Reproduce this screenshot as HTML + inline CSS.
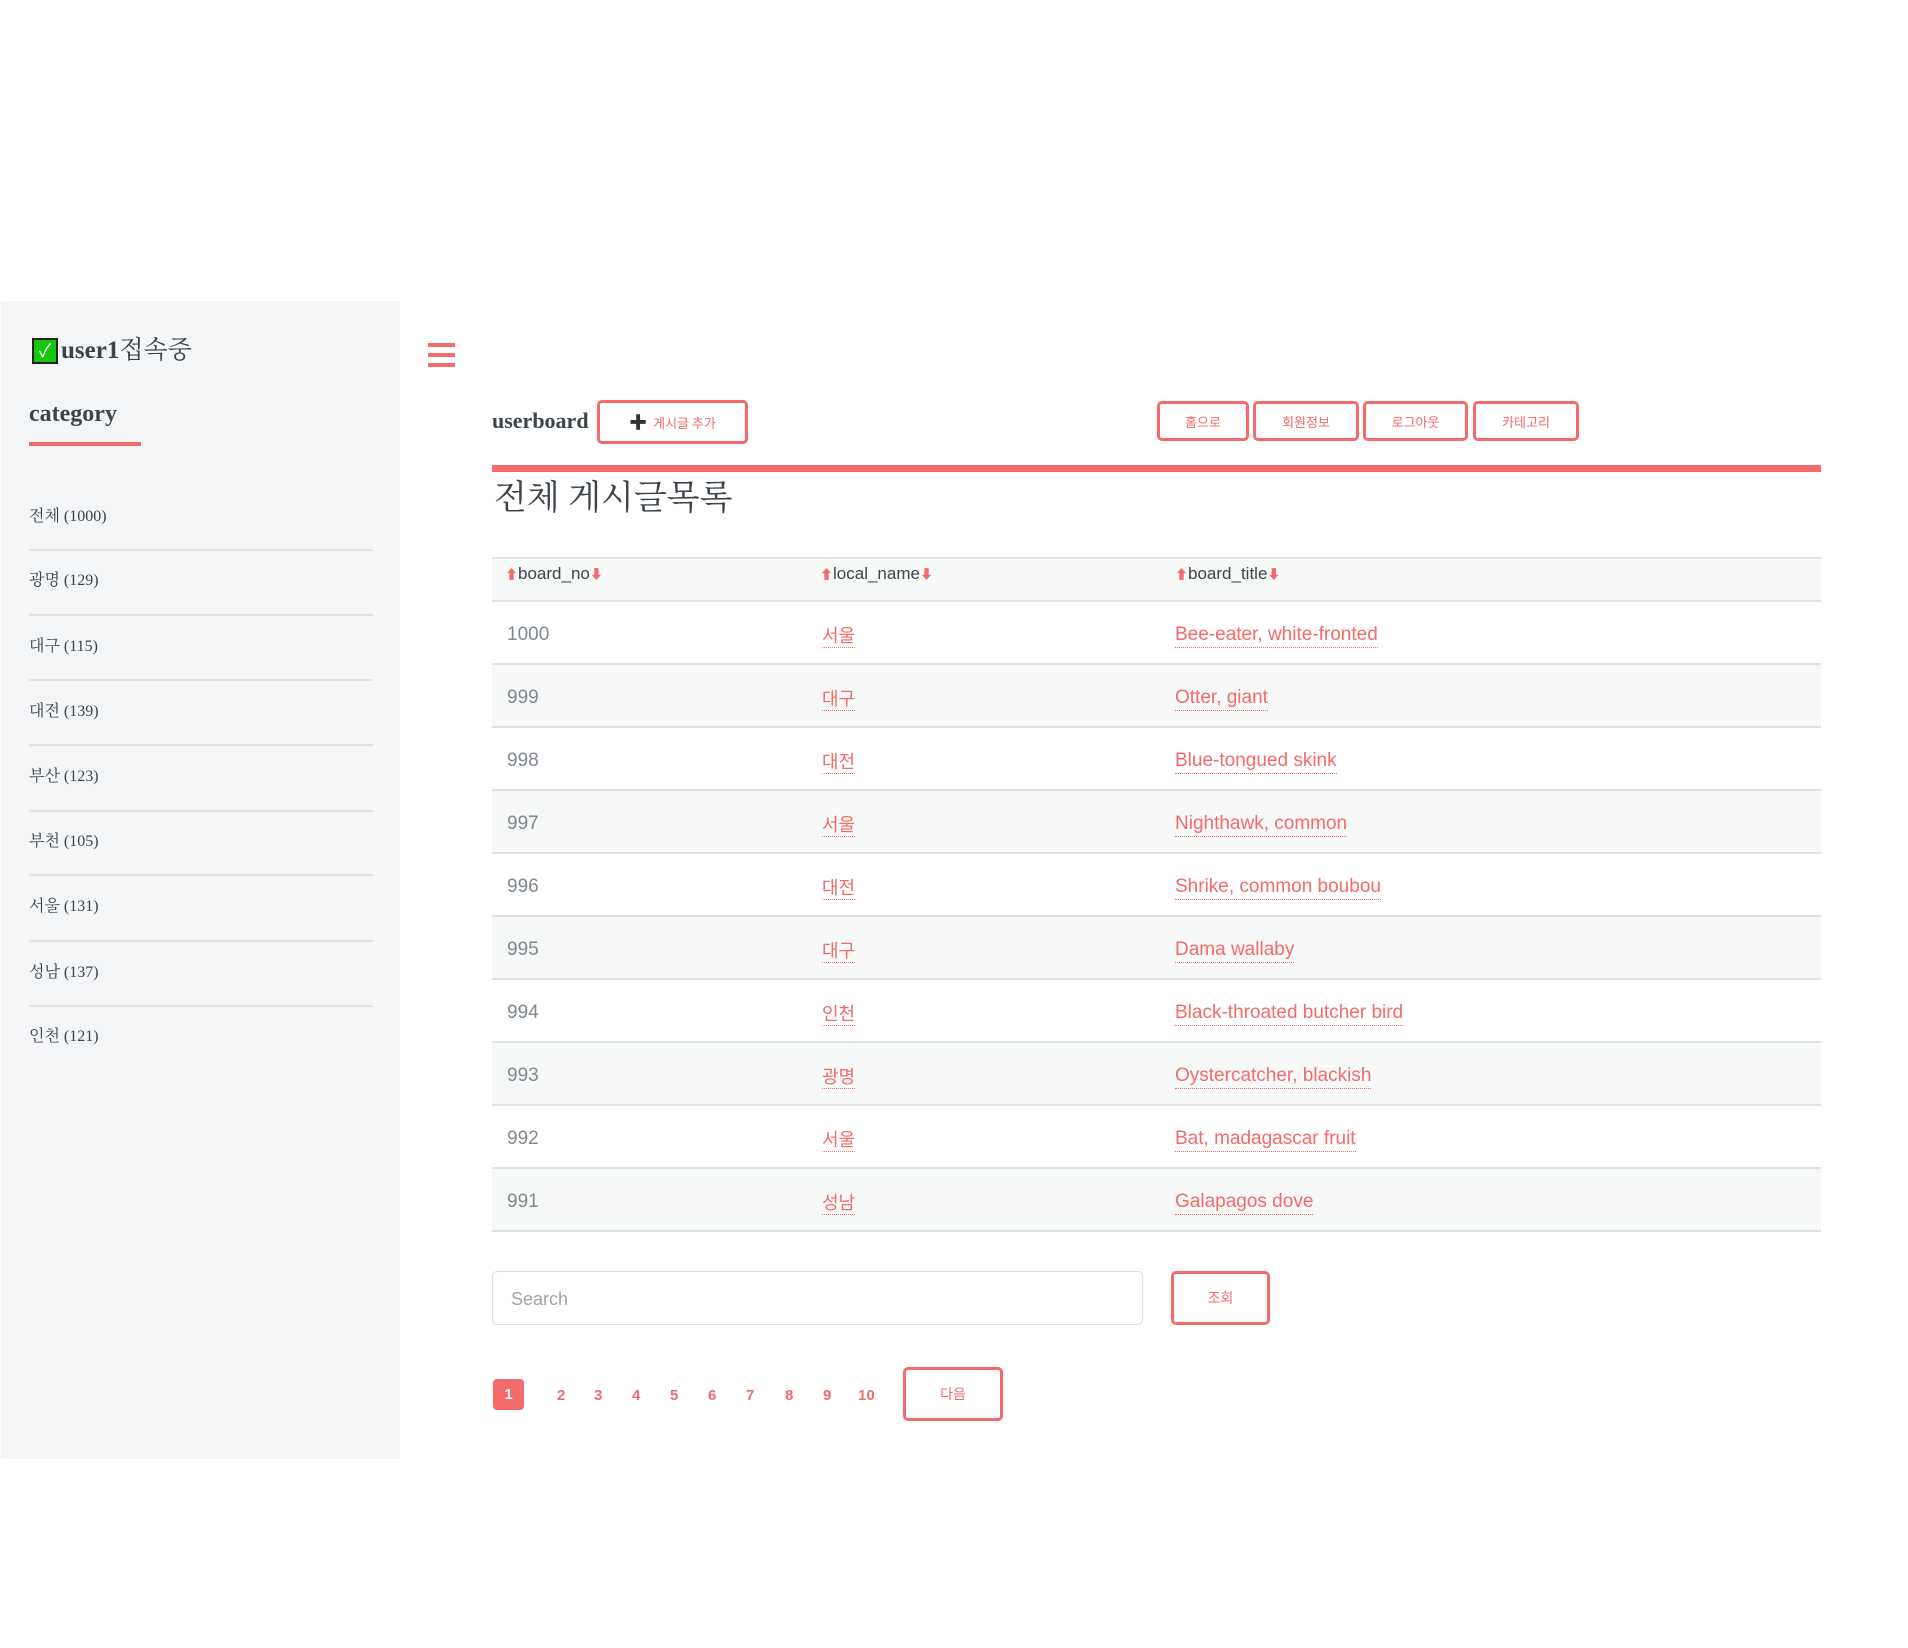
<!DOCTYPE html>
<html><head><meta charset="utf-8"><style>
*{margin:0;padding:0;box-sizing:border-box}
body{width:1908px;height:1648px;background:#fff;position:relative;font-family:"Liberation Sans","Noto Sans CJK KR",sans-serif;overflow:hidden}
.a{position:absolute}
.sb{left:1px;top:301px;width:399px;height:1158px;background:#f4f5f7}
.serif{font-family:"Liberation Serif","Noto Serif CJK KR",serif;color:#3d4449}
.cat{left:29px;width:344px;font-size:16px;line-height:20px;font-family:"Liberation Serif","Noto Serif CJK KR",serif;color:#3d4449}
.ln{left:29px;width:344px;height:2px;background:#dfe1e3}
.btn{border:3px solid #f56a6a;border-radius:5px;color:#f56a6a;font-size:13px;display:flex;align-items:center;justify-content:center;font-family:"Noto Sans CJK KR",sans-serif;background:#fff}
.row{left:492px;width:1329px;height:63px;border-bottom:2px solid #dfe2e4}
.row span{position:absolute;top:21px;font-size:19px;line-height:24px}
.n{left:15px;color:#7f888f}
.l{left:330px;color:#f56a6a;border-bottom:1px dotted #f56a6a;font-family:"Noto Sans CJK KR",sans-serif;font-size:18px!important}
.t{left:683px;color:#f56a6a;border-bottom:1px dotted #f56a6a}
.pg{top:1387px;font-size:15px;color:#f56a6a;font-weight:bold}
.ar{color:#f56a6a;font-size:13px}
</style></head><body>
<div class="a sb"></div>
<div class="a" style="left:32px;top:338px;width:26px;height:26px;background:#16c60c;border:2px solid #222;color:#fff;font-size:18px;line-height:22px;text-align:center">✓</div>
<div class="a serif" style="left:61px;top:335px;font-size:25px;font-weight:bold;line-height:32px">user1<span style="font-weight:normal">접속중</span></div>
<div class="a serif" style="left:29px;top:400px;font-size:24px;font-weight:bold;line-height:28px">category</div>
<div class="a" style="left:29px;top:442px;width:112px;height:4px;background:#f56a6a"></div>
<div class="a cat" style="top:507px">전체 (1000)</div><div class="a ln" style="top:549px"></div>
<div class="a cat" style="top:571px">광명 (129)</div><div class="a ln" style="top:614px"></div>
<div class="a cat" style="top:637px">대구 (115)</div><div class="a ln" style="top:679px"></div>
<div class="a cat" style="top:702px">대전 (139)</div><div class="a ln" style="top:744px"></div>
<div class="a cat" style="top:767px">부산 (123)</div><div class="a ln" style="top:810px"></div>
<div class="a cat" style="top:832px">부천 (105)</div><div class="a ln" style="top:874px"></div>
<div class="a cat" style="top:897px">서울 (131)</div><div class="a ln" style="top:940px"></div>
<div class="a cat" style="top:963px">성남 (137)</div><div class="a ln" style="top:1005px"></div>
<div class="a cat" style="top:1027px">인천 (121)</div>

<div class="a" style="left:428px;top:343px;width:27px;height:4px;background:#f56a6a"></div>
<div class="a" style="left:428px;top:353px;width:27px;height:4px;background:#f56a6a"></div>
<div class="a" style="left:428px;top:363px;width:27px;height:4px;background:#f56a6a"></div>

<div class="a serif" style="left:492px;top:407px;font-size:22px;font-weight:bold;line-height:28px">userboard</div>
<div class="a btn" style="left:597px;top:400px;width:151px;height:44px"><b style="color:#333;font-size:18px;margin-right:6px">✚</b>게시글 추가</div>
<div class="a btn" style="left:1157px;top:401px;width:92px;height:40px">홈으로</div>
<div class="a btn" style="left:1253px;top:401px;width:106px;height:40px">회원정보</div>
<div class="a btn" style="left:1363px;top:401px;width:105px;height:40px">로그아웃</div>
<div class="a btn" style="left:1473px;top:401px;width:106px;height:40px">카테고리</div>
<div class="a" style="left:492px;top:465px;width:1329px;height:7px;background:#f56a6a"></div>
<div class="a serif" style="left:494px;top:479px;font-size:34px;line-height:40px">전체 게시글목록</div>

<div class="a" style="left:492px;top:557px;width:1329px;height:45px;background:#f7f8f8;border-top:2px solid #e2e4e5;border-bottom:2px solid #dfe2e4"></div>
<div class="a" style="left:505px;top:562px;font-size:17px;color:#3d4449;line-height:24px"><span class="ar">⬆</span>board_no<span class="ar">⬇</span></div>
<div class="a" style="left:820px;top:562px;font-size:17px;color:#3d4449;line-height:24px"><span class="ar">⬆</span>local_name<span class="ar">⬇</span></div>
<div class="a" style="left:1175px;top:562px;font-size:17px;color:#3d4449;line-height:24px"><span class="ar">⬆</span>board_title<span class="ar">⬇</span></div>

<div class="a row" style="top:602px"><span class="n">1000</span><span class="l">서울</span><span class="t">Bee-eater, white-fronted</span></div>
<div class="a row" style="top:665px;background:#f7f8f8"><span class="n">999</span><span class="l">대구</span><span class="t">Otter, giant</span></div>
<div class="a row" style="top:728px"><span class="n">998</span><span class="l">대전</span><span class="t">Blue-tongued skink</span></div>
<div class="a row" style="top:791px;background:#f7f8f8"><span class="n">997</span><span class="l">서울</span><span class="t">Nighthawk, common</span></div>
<div class="a row" style="top:854px"><span class="n">996</span><span class="l">대전</span><span class="t">Shrike, common boubou</span></div>
<div class="a row" style="top:917px;background:#f7f8f8"><span class="n">995</span><span class="l">대구</span><span class="t">Dama wallaby</span></div>
<div class="a row" style="top:980px"><span class="n">994</span><span class="l">인천</span><span class="t">Black-throated butcher bird</span></div>
<div class="a row" style="top:1043px;background:#f7f8f8"><span class="n">993</span><span class="l">광명</span><span class="t">Oystercatcher, blackish</span></div>
<div class="a row" style="top:1106px"><span class="n">992</span><span class="l">서울</span><span class="t">Bat, madagascar fruit</span></div>
<div class="a row" style="top:1169px;background:#f7f8f8"><span class="n">991</span><span class="l">성남</span><span class="t">Galapagos dove</span></div>

<div class="a" style="left:492px;top:1271px;width:651px;height:54px;border:1px solid #dcdee0;border-radius:5px;font-size:18px;color:#9fa4a8;padding:17px 18px;line-height:20px">Search</div>
<div class="a btn" style="left:1171px;top:1271px;width:99px;height:54px;font-size:14px">조회</div>

<div class="a" style="left:493px;top:1379px;width:31px;height:31px;background:#f56a6a;border-radius:4px;color:#fff;font-size:15px;font-weight:bold;text-align:center;line-height:31px">1</div>
<div class="a pg" style="left:557px">2</div>
<div class="a pg" style="left:594px">3</div>
<div class="a pg" style="left:632px">4</div>
<div class="a pg" style="left:670px">5</div>
<div class="a pg" style="left:708px">6</div>
<div class="a pg" style="left:746px">7</div>
<div class="a pg" style="left:785px">8</div>
<div class="a pg" style="left:823px">9</div>
<div class="a pg" style="left:858px">10</div>
<div class="a btn" style="left:903px;top:1367px;width:100px;height:54px;font-size:14px">다음</div>
</body></html>
